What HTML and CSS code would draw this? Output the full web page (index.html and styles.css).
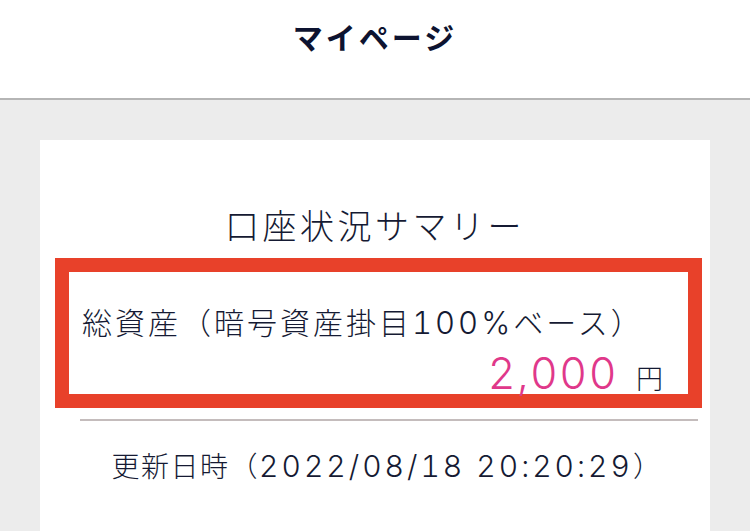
FILE: index.html
```html
<!DOCTYPE html>
<html lang="ja">
<head>
    <meta charset="UTF-8">
    <meta name="viewport" content="width=device-width, initial-scale=1.0">
    <title>マイページ</title>
    <link rel="stylesheet" href="styles.css">
</head>
<body>
    <header class="page-header">
        <h1 class="page-title">マイページ</h1>
    </header>
    <main class="page-body">
        <section class="summary-card">
            <h2 class="summary-title">口座状況サマリー</h2>
            <div class="asset-box">
                <p class="asset-label">総資産（暗号資産掛目<span class="num">100%</span>ベース）</p>
                <p class="asset-value">
                    <span class="asset-amount">2,000</span>
                    <span class="asset-unit">円</span>
                </p>
            </div>
            <hr class="summary-divider">
            <p class="updated-at">更新日時（<span class="num">2022/08/18 20:20:29</span>）</p>
        </section>
    </main>
</body>
</html>
```

FILE: styles.css
```css
body {
    margin: 0;
    padding: 0;
    font-family: "Noto Sans CJK JP", "Noto Sans", sans-serif;
    color: #151a33;
    background: #ececec;
    height: 531px;
    overflow: hidden;
    display: flex;
    flex-direction: column;
}

.num {
    font-family: "Inter", "Noto Sans", sans-serif;
    font-weight: 300;
    font-variant-numeric: tabular-nums;
}

.page-header {
    background: #fff;
    height: 100px;
    border-bottom: 2px solid #b5b5b5;
    box-sizing: border-box;
}

.page-title {
    margin: 0;
    padding-top: 14px;
    font-size: 30px;
    line-height: 44px;
    font-weight: 700;
    text-align: center;
    letter-spacing: 3px;
    color: #0d1330;
}

.page-body {
    flex: 1;
    padding: 40px 40px 0 40px;
    display: flex;
}

.summary-card {
    flex: 1;
    background: #fff;
    display: flex;
    flex-direction: column;
}

.summary-title {
    margin: 63px 0 0 0;
    font-size: 34px;
    line-height: 44px;
    font-weight: 300;
    text-align: center;
    letter-spacing: 3.5px;
}

.asset-box {
    margin: 11px 8px 0 15px;
    border: 14px solid #e8412a;
    height: 122px;
    padding: 0 25px 0 13px;
}

.asset-label {
    margin: 29px 0 0 0;
    font-size: 30px;
    line-height: 40px;
    font-weight: 300;
    letter-spacing: 3px;
}

.asset-label .num {
    font-size: 31px;
    letter-spacing: 3px;
}

.asset-value {
    margin: 5px 0 0 0;
    display: flex;
    justify-content: flex-end;
    align-items: baseline;
    gap: 18px;
    line-height: 50px;
}

.asset-amount {
    font-family: "Inter", "Noto Sans", sans-serif;
    font-size: 43px;
    font-weight: 300;
    font-variant-numeric: tabular-nums;
    letter-spacing: 1.5px;
    color: #e0388a;
}

.asset-unit {
    font-size: 27px;
    font-weight: 300;
}

.summary-divider {
    margin: 11px 12px 0 40px;
    border: none;
    border-top: 2px solid #c4bcbc;
    height: 0;
}

.updated-at {
    margin: 24px 0 0 0;
    font-size: 28px;
    line-height: 40px;
    font-weight: 300;
    text-align: center;
    letter-spacing: 1.5px;
    padding-left: 24px;
}

.updated-at .num {
    font-size: 30px;
    letter-spacing: 3px;
}
```
